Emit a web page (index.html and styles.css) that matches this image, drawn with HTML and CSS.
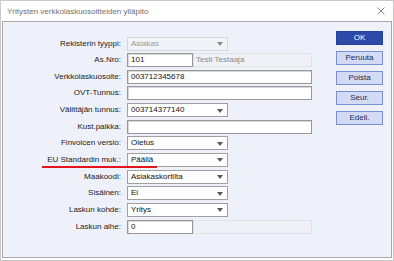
FILE: index.html
```html
<!DOCTYPE html>
<html lang="fi">
<head>
<meta charset="utf-8">
<title>Yritysten verkkolaskuosoitteiden ylläpito</title>
<link rel="stylesheet" href="styles.css">
</head>
<body>
<div class="window">
  <div class="titlebar">
    <span class="title">Yritysten verkkolaskuosoitteiden ylläpito</span>
    <svg class="close" width="8" height="8" viewBox="0 0 8 8"><path d="M0.5 0.5 L7.5 7.5 M7.5 0.5 L0.5 7.5" stroke="#8a8a8a" stroke-width="1" fill="none"/></svg>
  </div>
  <div class="panel">
    <div class="form">
      <label class="lbl">Rekisterin tyyppi:</label>
      <div class="field"><div class="select disabled"><span>Asiakas</span><i class="arrow"></i></div></div>

      <label class="lbl">As.Nro:</label>
      <div class="field"><div class="input short">101</div><div class="readonly">Testi Testaaja</div></div>

      <label class="lbl">Verkkolaskuosoite:</label>
      <div class="field"><div class="input full">003712345678</div></div>

      <label class="lbl">OVT-Tunnus:</label>
      <div class="field"><div class="input full"></div></div>

      <label class="lbl">Välittäjän tunnus:</label>
      <div class="field"><div class="select"><span>003714377140</span><i class="arrow"></i></div></div>

      <label class="lbl">Kust.paikka:</label>
      <div class="field"><div class="input full"></div></div>

      <label class="lbl">Finvoicen versio:</label>
      <div class="field"><div class="select"><span>Oletus</span><i class="arrow"></i></div></div>

      <label class="lbl">EU Standardin muk.:</label>
      <div class="field"><div class="select"><span>Päällä</span><i class="arrow"></i></div></div>

      <label class="lbl">Maakoodi:</label>
      <div class="field"><div class="select"><span>Asiakaskortilta</span><i class="arrow"></i></div></div>

      <label class="lbl">Sisäinen:</label>
      <div class="field"><div class="select"><span>Ei</span><i class="arrow"></i></div></div>

      <label class="lbl">Laskun kohde:</label>
      <div class="field"><div class="select"><span>Yritys</span><i class="arrow"></i></div></div>

      <label class="lbl">Laskun aihe:</label>
      <div class="field"><div class="input short">0</div><div class="readonly"></div></div>
    </div>
    <div class="buttons">
      <button class="btn primary">OK</button>
      <button class="btn">Peruuta</button>
      <button class="btn">Poista</button>
      <button class="btn">Seur.</button>
      <button class="btn">Edell.</button>
    </div>
    <div class="mark"></div>
  </div>
</div>
</body>
</html>
```
FILE: styles.css
```css
html, body {
  margin: 0;
  padding: 0;
  background: #ffffff;
}
body {
  width: 394px;
  height: 261px;
  font-family: "Liberation Sans", Arial, sans-serif;
  font-size: 8px;
  color: #1a1a1a;
}
.window {
  box-sizing: border-box;
  width: 394px;
  height: 261px;
  border: 1px solid #c9c9c9;
  background: #ffffff;
  display: flex;
  flex-direction: column;
}
.titlebar {
  height: 20px;
  flex: none;
  display: flex;
  align-items: center;
  justify-content: space-between;
  padding: 0 8px 0 6px;
}
.title {
  font-size: 8px;
  color: #6f6f6f;
  letter-spacing: 0;
}
.close {
  display: block;
  margin-top: 0;
}
.panel {
  position: relative;
  flex: 1;
  margin: 0 1px 2px 1px;
  border: 1px solid #a8a8a8;
  background: #eef1fa;
  display: flex;
  align-items: flex-start;
}
.form {
  display: grid;
  grid-template-columns: 118px auto;
  grid-auto-rows: 16.65px;
  column-gap: 6px;
  align-items: center;
  padding-top: 13.2px;
}
.lbl {
  text-align: right;
  white-space: nowrap;
  line-height: 14px;
  color: #1a1a1a;
}
.field {
  display: flex;
  align-items: center;
  height: 14px;
}
.input, .select, .readonly {
  box-sizing: border-box;
  height: 14px;
  line-height: 12px;
  white-space: nowrap;
}
.input {
  background: #ffffff;
  border: 1px solid #979797;
  box-shadow: inset 1px 1px 0 #d8d8d8;
  padding-left: 3px;
  color: #111;
}
.input.short { width: 66px; }
.input.full { width: 185px; }
.readonly {
  width: 119px;
  background: #eff1f7;
  border: 1px solid #dfe2ea;
  padding-left: 2px;
  color: #8a8a8a;
}
.select {
  width: 101px;
  background: #ffffff;
  border: 1px solid #a0a0a0;
  padding-left: 3px;
  display: flex;
  align-items: center;
  justify-content: space-between;
  color: #111;
}
.select.disabled {
  background: #f1f3f9;
  border-color: #d3d7e0;
  color: #9a9a9a;
}
.arrow {
  width: 0;
  height: 0;
  border-left: 3.5px solid transparent;
  border-right: 3.5px solid transparent;
  border-top: 4px solid #5a5a5a;
  margin-right: 4px;
  margin-top: 1px;
}
.select.disabled .arrow { border-top-color: #8a8a8a; }
.buttons {
  margin-left: auto;
  padding: 9px 8px 0 0;
  display: flex;
  flex-direction: column;
  gap: 6px;
}
.btn {
  box-sizing: border-box;
  width: 47px;
  height: 14px;
  padding: 0;
  margin: 0;
  font-family: "Liberation Sans", Arial, sans-serif;
  font-size: 8px;
  line-height: 12px;
  color: #1f2a55;
  background: #d2dbf3;
  border: 1px solid #7c8fd0;
  border-radius: 0;
}
.btn.primary {
  background: #2d4aa8;
  border-color: #23409a;
  color: #ffffff;
}
.mark {
  position: absolute;
  left: 39px;
  top: 143.5px;
  width: 115px;
  height: 2px;
  background: #e3141b;
}
```
